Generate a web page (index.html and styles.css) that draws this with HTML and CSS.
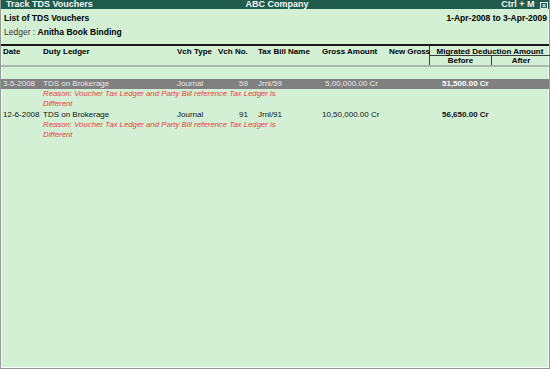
FILE: index.html
```html
<!DOCTYPE html>
<html lang="en">
<head>
  <meta charset="UTF-8">
  <title>Track TDS Vouchers</title>
  <link rel="stylesheet" href="styles.css">
</head>
<body>
  <div class="window">
    <div class="titlebar">
      <span class="title-left">Track TDS Vouchers</span>
      <span class="title-center">ABC Company</span>
      <span class="title-right">Ctrl + M <span class="close">&#215;</span></span>
    </div>
    <div class="report-head">
      <div class="head-line">
        <span class="report-name">List of TDS Vouchers</span>
        <span class="period">1-Apr-2008 to 3-Apr-2009</span>
      </div>
      <div class="ledger"><span class="ledger-label">Ledger :</span> <b>Anitha Book Binding</b></div>
    </div>
    <div class="cols">
      <div class="c-date">Date</div>
      <div class="c-ledger">Duty Ledger</div>
      <div class="c-type">Vch Type</div>
      <div class="c-no">Vch No.</div>
      <div class="c-tax">Tax Bill Name</div>
      <div class="c-gross">Gross Amount</div>
      <div class="c-new">New Gross</div>
      <div class="c-mig">Migrated Deduction Amount</div>
      <div class="c-before">Before</div>
      <div class="c-after">After</div>
    </div>
    <div class="rows">
      <div class="row selected">
        <div>3-5-2008</div>
        <div>TDS on Brokerage</div>
        <div>Journal</div>
        <div class="num">59</div>
        <div class="tax">Jrnl/59</div>
        <div class="gross">5,00,000.00 Cr</div>
        <div class="amt">51,500.00 Cr</div>
      </div>
      <div class="reason">Reason: Voucher Tax Ledger and Party Bill reference Tax Ledger is<br>Different</div>
      <div class="row">
        <div>12-6-2008</div>
        <div>TDS on Brokerage</div>
        <div>Journal</div>
        <div class="num">91</div>
        <div class="tax">Jrnl/91</div>
        <div class="gross">10,50,000.00 Cr</div>
        <div class="amt">56,650.00 Cr</div>
      </div>
      <div class="reason">Reason: Voucher Tax Ledger and Party Bill reference Tax Ledger is<br>Different</div>
    </div>
  </div>
</body>
</html>
```

FILE: styles.css
```css
body {
  margin: 0;
  font-family: "Liberation Sans", Arial, sans-serif;
  font-size: 8px;
  color: #000;
}
.window {
  width: 550px;
  height: 369px;
  box-sizing: border-box;
  border: 1px solid #8f9a90;
  border-top: none;
  background: #d3f0d5;
  box-shadow: inset 1px 0 0 #f4fbf4, inset -1px -1px 0 #f4fbf4;
  white-space: nowrap;
}
.titlebar {
  display: flex;
  justify-content: space-between;
  align-items: center;
  height: 9px;
  padding: 0 1px 0 5px;
  background: #1f5c4b;
  color: #f4f4f4;
  font-weight: bold;
  font-size: 9px;
  line-height: 9px;
}
.title-left, .title-right {
  width: 120px;
}
.title-right {
  text-align: right;
}
.close {
  display: inline-block;
  width: 8px;
  height: 7px;
  margin-left: 3px;
  border: 1px solid #e6e6e6;
  box-sizing: border-box;
  font-size: 7px;
  line-height: 5px;
  text-align: center;
  vertical-align: -1px;
}
.report-head {
  padding: 4px 2px 0 3px;
  height: 31px;
  border-bottom: 2px solid #1a1a1a;
}
.head-line {
  display: flex;
  justify-content: space-between;
  font-weight: bold;
  font-size: 8.5px;
}
.ledger {
  margin-top: 4px;
  font-size: 8.5px;
}
.ledger-label {
  color: #333;
}
.cols {
  display: grid;
  grid-template-columns: 2px 40px 134px 41px 30px 10px 64px 67px 41px 62px 58px;
  grid-template-rows: 10px 9px;
  font-weight: bold;
  border-bottom: 2px solid #a8b9a9;
  line-height: 12px;
}
.cols > div {
  grid-row: 1 / 3;
}
.c-date { grid-column: 2; }
.c-ledger { grid-column: 3; }
.c-type { grid-column: 4; }
.c-no { grid-column: 5 / 7; }
.c-tax { grid-column: 7; }
.c-gross { grid-column: 8; }
.c-new {
  grid-column: 9;
  text-align: right;
  letter-spacing: -0.1px;
  border-right: 1px solid #3a3a3a;
}
.cols .c-mig {
  grid-row: 1;
  grid-column: 10 / 12;
  text-align: center;
  border-bottom: 1px solid #3a3a3a;
}
.cols .c-before {
  grid-row: 2;
  grid-column: 10;
  text-align: center;
  border-right: 1px solid #3a3a3a;
  line-height: 9px;
}
.cols .c-after {
  grid-row: 2;
  grid-column: 11;
  text-align: center;
  line-height: 9px;
}
.rows {
  padding-top: 12px;
}
.row {
  display: grid;
  grid-template-columns: 40px 134px 41px 30px 10px 64px 67px 41px 62px 58px;
  padding-left: 2px;
  height: 10px;
  line-height: 10px;
  color: #111;
}
.row .num {
  text-align: right;
}
.row .tax {
  grid-column: 6;
}
.row .gross {
  grid-column: 7 / 9;
  text-align: right;
  padding-right: 52px;
}
.row .amt {
  grid-column: 9;
  padding-left: 12px;
  font-weight: bold;
}
.row.selected {
  background: #808080;
  color: #e8e8e8;
}
.row.selected .amt {
  color: #fff;
}
.reason {
  padding-left: 42px;
  color: #e8413a;
  font-style: italic;
  font-size: 7.8px;
  line-height: 9.5px;
  margin-bottom: 2px;
}
```
